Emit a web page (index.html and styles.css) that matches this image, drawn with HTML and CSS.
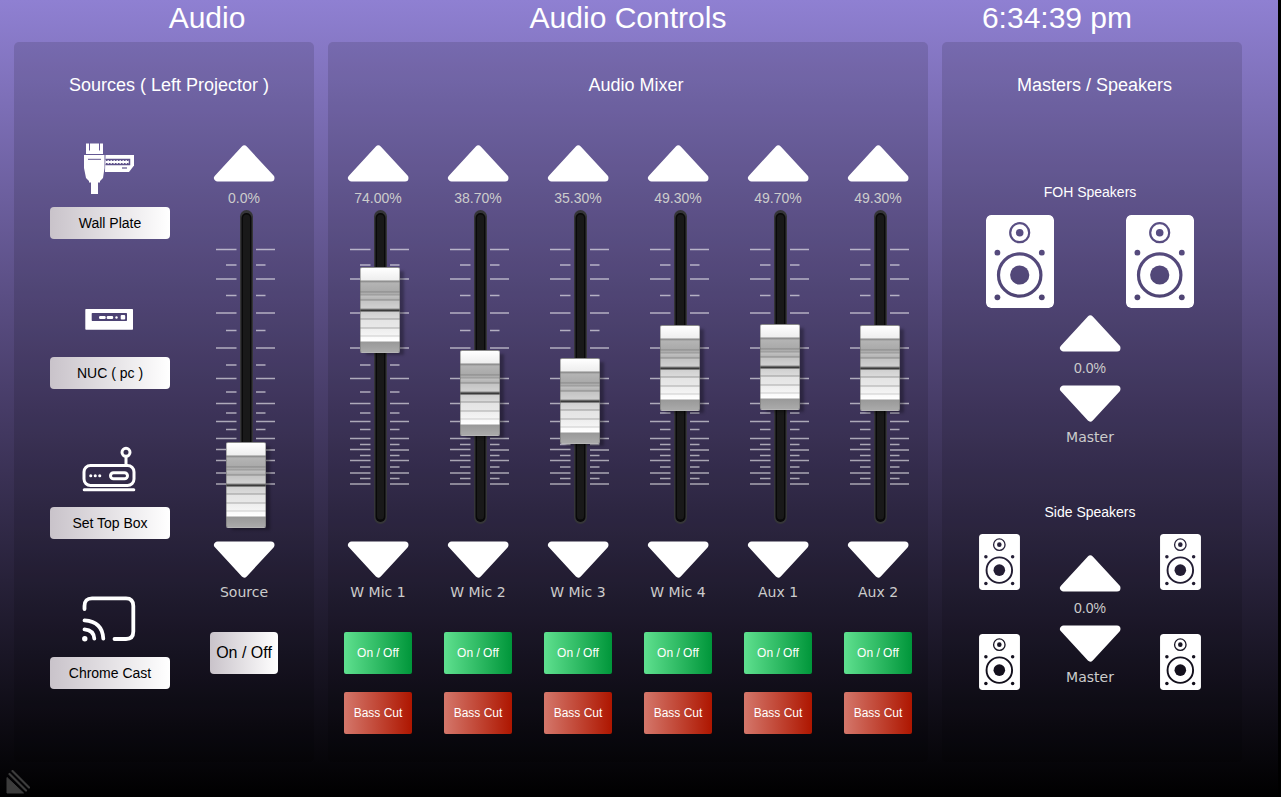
FILE: index.html
```html
<!DOCTYPE html>
<html lang="en">
<head>
    <meta charset="UTF-8">
    <meta name="viewport" content="width=device-width, initial-scale=1.0">
    <title>Audio Controls</title>
    <link rel="stylesheet" href="styles.css">
</head>
<body>
    <!-- Shared shapes -->
    <svg class="defs" aria-hidden="true">
        <symbol id="up" viewBox="0 0 62 38">
            <path d="M4.500 33H58L31.200 4Z" fill="#fff" stroke="#fff" stroke-width="7" stroke-linejoin="round"/>
        </symbol>
        <symbol id="down" viewBox="0 0 62 38">
            <path d="M4.500 4H58L31.200 33Z" fill="#fff" stroke="#fff" stroke-width="7" stroke-linejoin="round"/>
        </symbol>
        <mask id="speakerHoles">
            <rect width="68" height="93" rx="5" fill="#fff"/>
            <circle cx="33.7" cy="17.7" r="9.5" fill="none" stroke="#000" stroke-width="2.2"/>
            <circle cx="33.7" cy="17.7" r="3.8"/>
            <circle cx="33.7" cy="60" r="21.2" fill="none" stroke="#000" stroke-width="3.2"/>
            <circle cx="33.7" cy="60" r="9.6"/>
            <circle cx="11.4" cy="37.7" r="2.9"/>
            <circle cx="55.8" cy="37.7" r="2.9"/>
            <circle cx="11.4" cy="82.3" r="2.9"/>
            <circle cx="55.8" cy="82.3" r="2.9"/>
        </mask>
        <symbol id="speaker" viewBox="0 0 68 93">
            <rect width="68" height="93" rx="5" fill="#fff" mask="url(#speakerHoles)"/>
        </symbol>
        <symbol id="scale" viewBox="0 0 60 324">
            <g stroke="#fff" stroke-opacity=".58" stroke-width="1.600">
                <path d="M0 44.5H20.500M40 44.5H59M0 74H20.500M40 74H59M0 108H20.500M40 108H59M0 143H20.500M40 143H59M0 173.500H20.500M40 173.500H59M0 198.500H20.500M40 198.500H59M0 216.500H20.500M40 216.500H59M0 233.500H20.500M40 233.500H59M0 244.500H20.500M40 245H59M0 255.500H20.500M40 255.500H59M0 268H20.500M40 268H59M0 279H20.500M40 279H59"/>
                <path d="M10 60H20.500M40 60H49.500M10 90.500H20.500M40 90.500H49.500M10 125.500H20.500M40 125.500H49.500M10 160H20.500M40 160H49.500M10 187H20.500M40 187H49.500M10 208H20.500M40 208H49.500M10 224.500H20.500M40 224.500H49.500M10 239.500H20.500M40 239.500H49.500M10 250.500H20.500M40 250.500H49.500M10 262H20.500M40 262H49.500M10 273.500H20.500M40 273.500H49.500"/>
            </g>
            <rect x="24" y="5" width="13" height="314" rx="6.5" fill="#353538"/>
            <rect x="25.5" y="8" width="10" height="309" rx="5" fill="#090909"/>
            <rect x="27" y="9.5" width="7" height="305" rx="3.5" fill="#191919"/>
        </symbol>
    </svg>

    <div class="page">
        <header class="topbar">
            <h1 class="title title-left">Audio</h1>
            <h1 class="title">Audio Controls</h1>
            <time class="title title-clock">6:34:39 pm</time>
        </header>

        <main class="panels">
            <!-- Sources -->
            <section class="panel">
                <h2 class="heading heading-sources">Sources ( Left Projector )</h2>
                <div class="sources">
                    <div class="source-list">
                        <div class="source">
                            <svg class="icon" viewBox="0 0 54 54" aria-hidden="true">
                                <path d="M3 13V2.500H6V9.500H7V2.500H16V9.500H17V2.500H20V13Z" fill="#fff"/>
                                <path d="M1 14H21.500V27L20 37L17 40V41.500H15V53H8V41.500H6V40L3 37L1 27Z" fill="#fff"/>
                                <path d="M5 18.300H18" stroke="#62558f" stroke-width="1"/>
                                <path d="M22.500 14H51V24.500L46 31H22Z" fill="#fff"/>
                                <path d="M22.500 18.500H46.500V23.500H22.500" fill="none" stroke="#5e528a" stroke-width="1.5"/>
                                <path d="M23 19.500H46M23 22.500H46" stroke="#5e528a" stroke-width="1.2" stroke-dasharray="1.500 1.500"/>
                                <path d="M39 27H44" stroke="#5e528a" stroke-width="1.2"/>
                            </svg>
                            <button class="btn">Wall Plate</button>
                        </div>
                        <div class="source">
                            <svg class="icon" viewBox="0 0 54 54" aria-hidden="true">
                                <rect x="2.3" y="18" width="47.700" height="20.700" rx=".7" fill="#fff"/>
                                <rect x="8.7" y="22" width="35.300" height="8" rx=".7" fill="#4c4273"/>
                                <rect x="16" y="25" width="6.700" height="3" rx="1.2" fill="#fff"/>
                                <rect x="23.700" y="25" width="6.500" height="3" rx="1.2" fill="#fff"/>
                                <circle cx="33.500" cy="26.500" r="1.200" fill="#fff"/>
                                <rect x="37.700" y="24" width="4.500" height="4.500" rx="1" fill="#fff"/>
                            </svg>
                            <button class="btn">NUC ( pc )</button>
                        </div>
                        <div class="source">
                            <svg class="icon" viewBox="0 0 54 54" fill="none" stroke="#fff" stroke-width="3" stroke-linecap="round" aria-hidden="true">
                                <rect x="1" y="24.500" width="50" height="20" rx="6.500"/>
                                <path d="M1.200 48.700H50.800M43 15.500V24"/>
                                <circle cx="43" cy="11.300" r="4"/>
                                <rect x="27.500" y="31.700" width="17" height="6" rx="3"/>
                                <path d="M7.700 34.700H7.800M12.200 34.700H12.300M16.700 34.700H16.800"/>
                            </svg>
                            <button class="btn">Set Top Box</button>
                        </div>
                        <div class="source">
                            <svg class="icon" viewBox="0 0 54 54" fill="none" stroke="#fff" stroke-width="3.800" stroke-linecap="round" aria-hidden="true">
                                <path d="M1.500 18V15Q1.500 7.300 9 7.300H43Q50.300 7.300 50.300 15V40.500Q50.300 48 43 48H31.500"/>
                                <path d="M1.500 29.300Q19.500 30.500 20.300 47.700M1.500 38.300Q10.800 39 11.300 47.700"/>
                                <circle cx="1.800" cy="47.700" r="2.700" fill="#fff" stroke="none"/>
                            </svg>
                            <button class="btn">Chrome Cast</button>
                        </div>
                    </div>

                    <div class="strip">
                        <button class="arrow" aria-label="Source up"><svg class="arrow-shape"><use href="#up"/></svg></button>
                        <output class="value" for="source">0.0%</output>
                        <div class="fader">
                            <svg class="scale" aria-hidden="true"><use href="#scale"/></svg>
                            <input class="range" type="range" id="source" min="0" max="100" step="0.1" value="0">
                        </div>
                        <button class="arrow arrow-down" aria-label="Source down"><svg class="arrow-shape"><use href="#down"/></svg></button>
                        <label class="name" for="source">Source</label>
                        <button class="btn btn-power">On / Off</button>
                    </div>
                </div>
            </section>

            <!-- Mixer -->
            <section class="panel">
                <h2 class="heading heading-mixer">Audio Mixer</h2>
                <div class="mixer">
                    <div class="strip">
                        <button class="arrow" aria-label="W Mic 1 up"><svg class="arrow-shape"><use href="#up"/></svg></button>
                        <output class="value" for="mic1">74.00%</output>
                        <div class="fader">
                            <svg class="scale" aria-hidden="true"><use href="#scale"/></svg>
                            <input class="range" type="range" id="mic1" min="0" max="100" step="0.1" value="74">
                        </div>
                        <button class="arrow arrow-down" aria-label="W Mic 1 down"><svg class="arrow-shape"><use href="#down"/></svg></button>
                        <label class="name" for="mic1">W Mic 1</label>
                        <button class="toggle toggle-on">On / Off</button>
                        <button class="toggle toggle-cut">Bass Cut</button>
                    </div>
                    <div class="strip">
                        <button class="arrow" aria-label="W Mic 2 up"><svg class="arrow-shape"><use href="#up"/></svg></button>
                        <output class="value" for="mic2">38.70%</output>
                        <div class="fader">
                            <svg class="scale" aria-hidden="true"><use href="#scale"/></svg>
                            <input class="range" type="range" id="mic2" min="0" max="100" step="0.1" value="38.7">
                        </div>
                        <button class="arrow arrow-down" aria-label="W Mic 2 down"><svg class="arrow-shape"><use href="#down"/></svg></button>
                        <label class="name" for="mic2">W Mic 2</label>
                        <button class="toggle toggle-on">On / Off</button>
                        <button class="toggle toggle-cut">Bass Cut</button>
                    </div>
                    <div class="strip">
                        <button class="arrow" aria-label="W Mic 3 up"><svg class="arrow-shape"><use href="#up"/></svg></button>
                        <output class="value" for="mic3">35.30%</output>
                        <div class="fader">
                            <svg class="scale" aria-hidden="true"><use href="#scale"/></svg>
                            <input class="range" type="range" id="mic3" min="0" max="100" step="0.1" value="35.3">
                        </div>
                        <button class="arrow arrow-down" aria-label="W Mic 3 down"><svg class="arrow-shape"><use href="#down"/></svg></button>
                        <label class="name" for="mic3">W Mic 3</label>
                        <button class="toggle toggle-on">On / Off</button>
                        <button class="toggle toggle-cut">Bass Cut</button>
                    </div>
                    <div class="strip">
                        <button class="arrow" aria-label="W Mic 4 up"><svg class="arrow-shape"><use href="#up"/></svg></button>
                        <output class="value" for="mic4">49.30%</output>
                        <div class="fader">
                            <svg class="scale" aria-hidden="true"><use href="#scale"/></svg>
                            <input class="range" type="range" id="mic4" min="0" max="100" step="0.1" value="49.3">
                        </div>
                        <button class="arrow arrow-down" aria-label="W Mic 4 down"><svg class="arrow-shape"><use href="#down"/></svg></button>
                        <label class="name" for="mic4">W Mic 4</label>
                        <button class="toggle toggle-on">On / Off</button>
                        <button class="toggle toggle-cut">Bass Cut</button>
                    </div>
                    <div class="strip">
                        <button class="arrow" aria-label="Aux 1 up"><svg class="arrow-shape"><use href="#up"/></svg></button>
                        <output class="value" for="aux1">49.70%</output>
                        <div class="fader">
                            <svg class="scale" aria-hidden="true"><use href="#scale"/></svg>
                            <input class="range" type="range" id="aux1" min="0" max="100" step="0.1" value="49.7">
                        </div>
                        <button class="arrow arrow-down" aria-label="Aux 1 down"><svg class="arrow-shape"><use href="#down"/></svg></button>
                        <label class="name" for="aux1">Aux 1</label>
                        <button class="toggle toggle-on">On / Off</button>
                        <button class="toggle toggle-cut">Bass Cut</button>
                    </div>
                    <div class="strip">
                        <button class="arrow" aria-label="Aux 2 up"><svg class="arrow-shape"><use href="#up"/></svg></button>
                        <output class="value" for="aux2">49.30%</output>
                        <div class="fader">
                            <svg class="scale" aria-hidden="true"><use href="#scale"/></svg>
                            <input class="range" type="range" id="aux2" min="0" max="100" step="0.1" value="49.3">
                        </div>
                        <button class="arrow arrow-down" aria-label="Aux 2 down"><svg class="arrow-shape"><use href="#down"/></svg></button>
                        <label class="name" for="aux2">Aux 2</label>
                        <button class="toggle toggle-on">On / Off</button>
                        <button class="toggle toggle-cut">Bass Cut</button>
                    </div>
                </div>
            </section>

            <!-- Speakers -->
            <section class="panel">
                <h2 class="heading heading-masters">Masters / Speakers</h2>
                <div class="masters">
                    <div class="foh">
                        <h3 class="group-name">FOH Speakers</h3>
                        <div class="foh-speakers">
                            <svg class="speaker" aria-hidden="true"><use href="#speaker"/></svg>
                            <svg class="speaker" aria-hidden="true"><use href="#speaker"/></svg>
                        </div>
                        <div class="master">
                            <button class="arrow" aria-label="FOH master up"><svg class="arrow-shape"><use href="#up"/></svg></button>
                            <span class="value">0.0%</span>
                            <button class="arrow arrow-down" aria-label="FOH master down"><svg class="arrow-shape"><use href="#down"/></svg></button>
                            <span class="name">Master</span>
                        </div>
                    </div>
                    <div class="side">
                        <h3 class="group-name">Side Speakers</h3>
                        <div class="side-row">
                            <div class="side-speakers">
                                <svg class="speaker speaker-small" aria-hidden="true"><use href="#speaker"/></svg>
                                <svg class="speaker speaker-small" aria-hidden="true"><use href="#speaker"/></svg>
                            </div>
                            <div class="master master-side">
                                <button class="arrow" aria-label="Side master up"><svg class="arrow-shape"><use href="#up"/></svg></button>
                                <span class="value">0.0%</span>
                                <button class="arrow arrow-down" aria-label="Side master down"><svg class="arrow-shape"><use href="#down"/></svg></button>
                                <span class="name">Master</span>
                            </div>
                            <div class="side-speakers">
                                <svg class="speaker speaker-small" aria-hidden="true"><use href="#speaker"/></svg>
                                <svg class="speaker speaker-small" aria-hidden="true"><use href="#speaker"/></svg>
                            </div>
                        </div>
                    </div>
                </div>
            </section>
        </main>
    </div>

    <svg class="corner-logo" viewBox="0 0 24 24" aria-hidden="true">
        <path d="M1 7.500L17.500 23H1Z" fill="#3c3c3c" stroke="#3c3c3c" stroke-linejoin="round"/>
        <path d="M3.500 4L20 20.500M6.500 1L23 17.500" stroke="#3c3c3c" stroke-width="2.200" stroke-linecap="round"/>
    </svg>
</body>
</html>
```

FILE: styles.css
```css
* {
    box-sizing: border-box;
}
body {
    margin: 0;
    background-color: #000;
    color: #fff;
    font-family: "Liberation Sans", Arial, sans-serif;
}
button {
    border: none;
    padding: 0;
    cursor: pointer;
    font-family: inherit;
}
.defs {
    position: absolute;
    width: 0;
    height: 0;
}
.page {
    min-height: 100vh;
    margin-right: 3px;
    padding: 0 36px 35px 14px;
    background-image: linear-gradient(#8f80d2, #483d69 50%, #000);
}

/* Header and panels share the same three columns */
.topbar,
.panels {
    display: grid;
    grid-template-columns: 1fr 2fr 1fr;
    column-gap: 14px;
}
.title {
    height: 42px;
    margin: 0;
    font-size: 30px;
    font-weight: normal;
    line-height: 36px;
    text-align: center;
}
.title-left {
    padding-left: 86px;
}
.title-clock {
    padding-right: 70px;
}
.panel {
    min-height: 720px;
    padding-top: 30px;
    border-radius: 5px;
    background-color: rgba(0, 0, 0, 0.12);
}
.heading {
    margin: 0 0 43px;
    font-size: 18px;
    font-weight: normal;
    line-height: 26px;
    text-align: center;
}
.heading-sources {
    padding-left: 10px;
}
.heading-mixer {
    padding-left: 16px;
}
.heading-masters {
    padding-left: 5px;
}

/* Sources */
.sources {
    display: flex;
    justify-content: center;
    gap: 40px;
}
.source-list {
    display: flex;
    flex-direction: column;
    gap: 52px;
    width: 120px;
}
.source {
    display: flex;
    flex-direction: column;
    align-items: center;
    gap: 12px;
}
.icon {
    width: 54px;
    height: 54px;
    overflow: visible;
}
.btn {
    width: 120px;
    height: 32px;
    border-radius: 4px;
    background-image: linear-gradient(to right, #c9c3ca, #fff);
    color: #000;
    font-size: 14px;
}
.btn-power {
    width: 68px;
    height: 42px;
    margin-top: 30px;
    font-size: 16px;
}

/* Channel strip */
.mixer {
    display: grid;
    grid-template-columns: repeat(6, 1fr);
}
.strip {
    display: flex;
    flex-direction: column;
    align-items: center;
    padding-top: 4px;
}
.arrow {
    width: 62px;
    height: 38px;
    background: none;
}
.arrow-shape {
    display: block;
    width: 62px;
    height: 38px;
}
.value {
    margin-top: 5px;
    color: #ccc;
    font-size: 14px;
    line-height: 20px;
}
.name {
    margin-top: 3px;
    color: #ccc;
    font-family: "DejaVu Sans", Verdana, sans-serif;
    font-size: 14px;
    line-height: 20px;
}
.fader {
    display: grid;
    justify-items: center;
    align-items: start;
    width: 60px;
    height: 324px;
    margin: -3px 0 12px 4px;
}
.scale,
.range {
    grid-area: 1 / 1;
}
.scale {
    width: 60px;
    height: 324px;
}
.range {
    -webkit-appearance: none;
    appearance: none;
    writing-mode: vertical-lr;
    direction: rtl;
    width: 40px;
    height: 323px;
    margin: 0;
    background: none;
    cursor: pointer;
}
.range::-webkit-slider-thumb {
    -webkit-appearance: none;
    appearance: none;
    width: 40px;
    height: 86px;
    border: 1px solid rgba(110, 110, 110, 0.5);
    border-radius: 2px;
    box-shadow: 5px 3px 3px -1px rgba(0, 0, 0, 0.3);
    background-image: linear-gradient(
        #fff 0, #eee 12px, #888 13px, #999 14px, #b4b4b4 15px, #aaa 23px,
        #858585 24px, #b4b4b4 25px, #999 27px, #c0c0c0 28px, #b4b4b4 31px,
        #888 32px, #c4c4c4 33px, #d0d0d0 40px, #444 42px, #333 43px,
        #d0d0d0 44px, #dadada 50px, #999 51px, #e4e4e4 52px, #e8e8e8 59px,
        #aaa 60px, #eee 61px, #f4f4f4 67px, #ccc 68px, #fafafa 69px,
        #fff 73px, #999 74px, #aaa 84px);
}
.toggle {
    width: 68px;
    height: 42px;
    border-radius: 2px;
    color: #fff;
    font-size: 12px;
}
.toggle-on {
    margin-top: 30px;
    background-image: linear-gradient(to right, #5fe08f, #00963a);
}
.toggle-cut {
    margin-top: 18px;
    background-image: linear-gradient(to right, #d4776b, #ae1600);
}

/* Speakers */
.masters {
    padding: 41px 4px 0 0;
}
.group-name {
    margin: 0;
    font-size: 14px;
    font-weight: normal;
    line-height: 20px;
    text-align: center;
}
.foh-speakers {
    display: flex;
    justify-content: center;
    gap: 72px;
    margin: 13px 0 7px;
}
.speaker {
    width: 68px;
    height: 93px;
}
.speaker-small {
    width: 41px;
    height: 56px;
}
.master {
    display: flex;
    flex-direction: column;
    align-items: center;
}
.master .arrow-down {
    margin-top: 7px;
}
.master .name {
    margin-top: 4px;
}
.side {
    margin-top: 55px;
}
.side-row {
    display: flex;
    justify-content: center;
    gap: 39px;
    margin-top: 12px;
}
.side-speakers {
    display: flex;
    flex-direction: column;
    gap: 44px;
}
.master-side {
    padding-top: 21px;
}

.corner-logo {
    position: fixed;
    left: 6px;
    bottom: 3px;
    width: 24px;
    height: 24px;
}
```
